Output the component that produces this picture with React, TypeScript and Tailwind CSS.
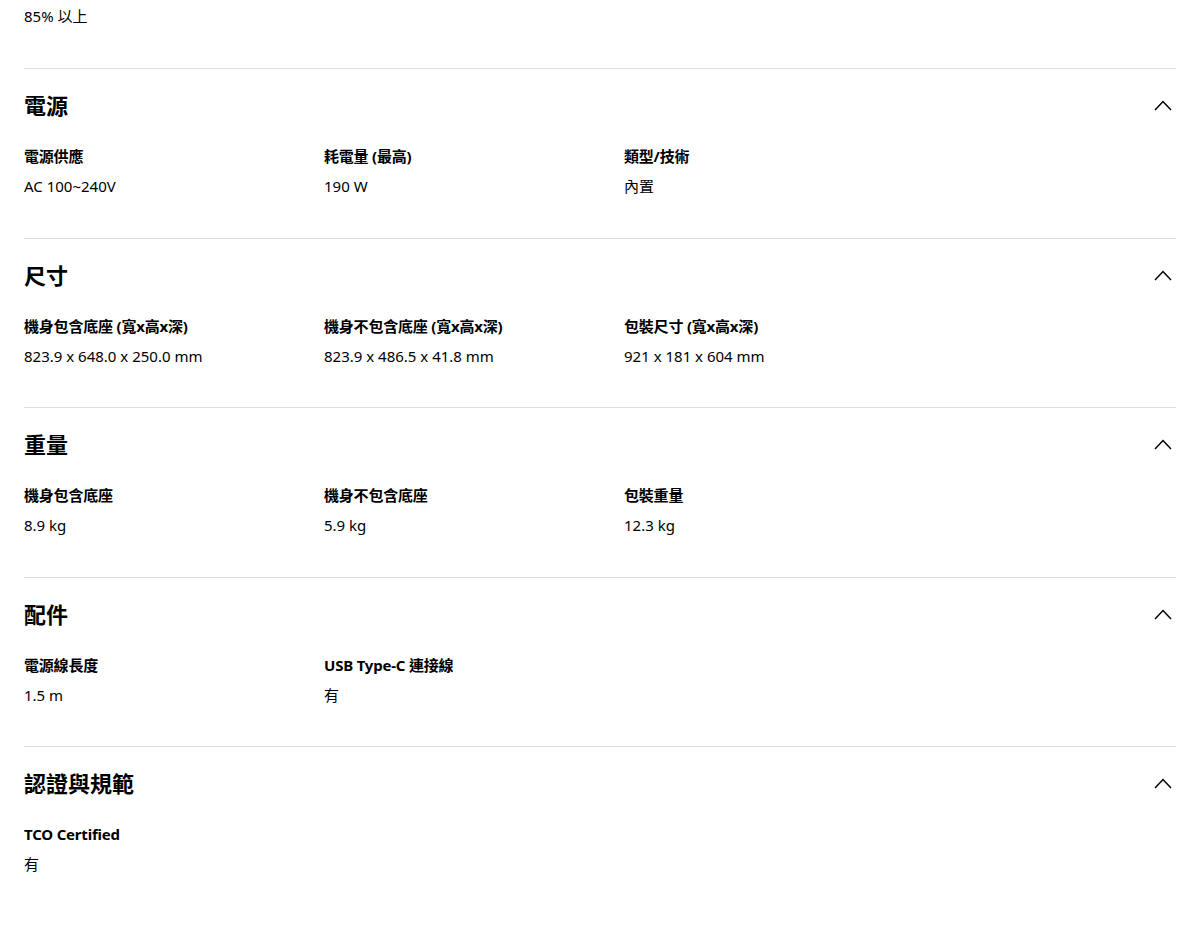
const sections = [
  {
    title: "電源",
    specs: [
      ["電源供應", "AC 100~240V"],
      ["耗電量 (最高)", "190 W"],
      ["類型/技術", "內置"],
    ],
  },
  {
    title: "尺寸",
    specs: [
      ["機身包含底座 (寬x高x深)", "823.9 x 648.0 x 250.0 mm"],
      ["機身不包含底座 (寬x高x深)", "823.9 x 486.5 x 41.8 mm"],
      ["包裝尺寸 (寬x高x深)", "921 x 181 x 604 mm"],
    ],
  },
  {
    title: "重量",
    specs: [
      ["機身包含底座", "8.9 kg"],
      ["機身不包含底座", "5.9 kg"],
      ["包裝重量", "12.3 kg"],
    ],
  },
  {
    title: "配件",
    specs: [
      ["電源線長度", "1.5 m"],
      ["USB Type-C 連接線", "有"],
    ],
  },
  {
    title: "認證與規範",
    specs: [["TCO Certified", "有"]],
  },
];

function Chevron() {
  return (
    <svg width="20" height="12" viewBox="0 0 20 12" fill="none" className="text-black">
      <path d="M2 11L10 2.5L18 11" stroke="currentColor" strokeWidth="1.5" />
    </svg>
  );
}

export default function App() {
  return (
    <main
      className="min-h-[929px] bg-white px-6 text-[#000] overflow-hidden"
      style={{ fontFamily: '"Noto Sans", "Noto Sans CJK TC", sans-serif' }}
    >
      <div className="pt-[6px] pb-[42px] text-[15px] leading-5">85% 以上</div>
      {sections.map((s) => (
        <section key={s.title} className="border-t border-[#dddddd] pt-[22px] pb-[41.5px]">
          <div className="flex h-7 items-center justify-between pr-[3px]">
            <h2 className="text-[22px] font-bold leading-7">{s.title}</h2>
            <Chevron />
          </div>
          <div className="mt-[27px] grid grid-cols-[300px_300px_300px]">
            {s.specs.map(([label, value]) => (
              <div key={label} className="flex flex-col gap-[10px]">
                <div className="text-[15px] font-bold leading-5 tracking-[-0.2px]">{label}</div>
                <div className="text-[15px] leading-5">{value}</div>
              </div>
            ))}
          </div>
        </section>
      ))}
    </main>
  );
}
